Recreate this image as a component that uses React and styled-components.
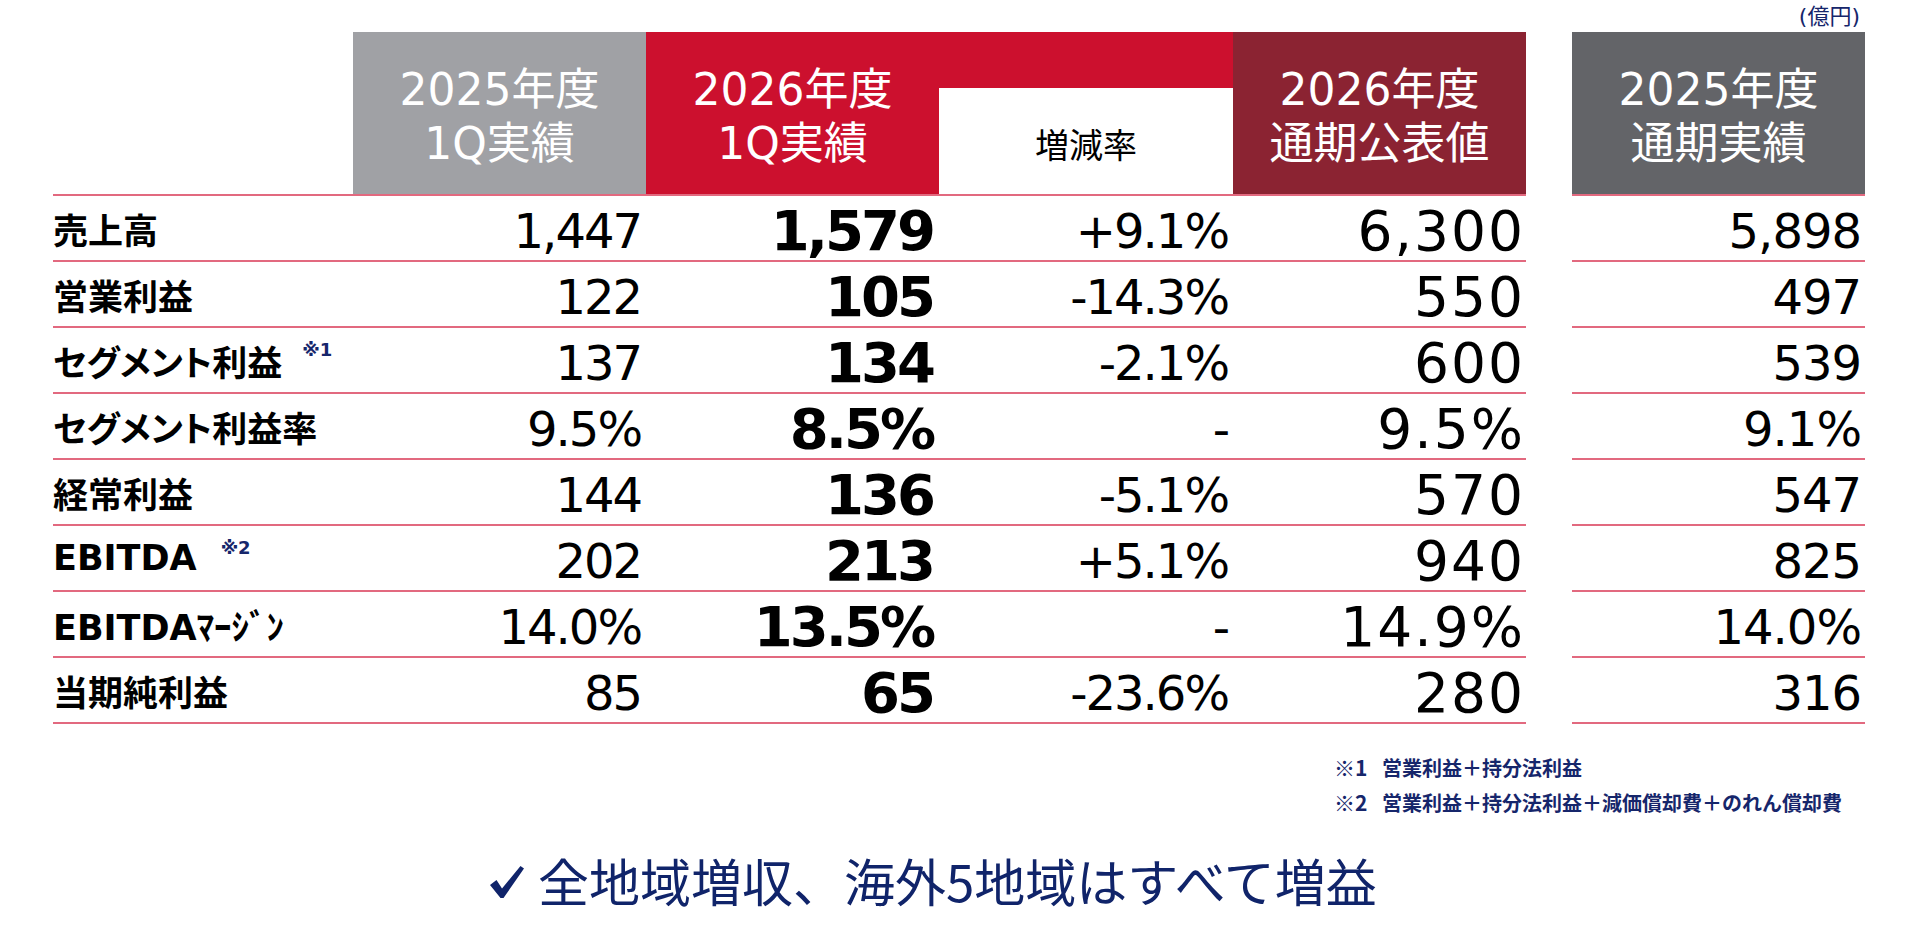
import React from "react";
import styled, { createGlobalStyle } from "styled-components";

const GlobalStyle = createGlobalStyle`
  html, body {
    margin: 0;
    padding: 0;
    background: #ffffff;
  }
  body {
    font-family: "DejaVu Sans", "Noto Sans CJK JP", sans-serif;
    color: #000000;
  }
`;

const LINE = "#e2697f";
const NAVY = "#16266b";

const Slide = styled.div`
  width: 1812px;
  margin-left: 53px;
  display: flex;
  flex-direction: column;
`;

const Unit = styled.div`
  align-self: flex-end;
  height: 32px;
  line-height: 34px;
  padding-right: 5px;
  font-size: 22px;
  color: ${NAVY};
`;

const Table = styled.div`
  display: grid;
  grid-template-columns: 300px 293px 293px 294px 293px 46px 293px;
  grid-template-rows: 164px repeat(8, 66px);
`;

const HeadBlank = styled.div`
  border-bottom: 2px solid ${LINE};
`;

const HeadCell = styled.div`
  background: ${(p) => p.$bg};
  color: #ffffff;
  display: flex;
  flex-direction: column;
  align-items: center;
  justify-content: center;
  padding-top: 8px;
  font-size: 44px;
  line-height: 54px;
  border-bottom: 2px solid ${LINE};
`;

const RateHead = styled.div`
  display: flex;
  flex-direction: column;
  border-bottom: 2px solid ${LINE};
`;

const RateBand = styled.div`
  height: 56px;
  background: #cc102e;
`;

const RateTitle = styled.div`
  flex: 1;
  display: flex;
  align-items: center;
  justify-content: center;
  padding-top: 4px;
  font-family: "Noto Sans CJK JP", sans-serif;
  font-size: 34px;
`;

const Spacer = styled.div``;

const Label = styled.div`
  display: flex;
  align-items: center;
  font-size: 35px;
  font-weight: 700;
  font-feature-settings: "palt";
  white-space: nowrap;
  border-bottom: 2px solid ${LINE};
`;

const Sup = styled.span`
  align-self: flex-start;
  margin-top: 13px;
  margin-left: ${(p) => p.$gap}px;
  font-size: 18px;
  line-height: 18px;
  font-weight: 700;
  color: ${NAVY};
`;

const Num = styled.div`
  display: flex;
  align-items: center;
  justify-content: flex-end;
  padding: 6px ${(p) => 3 - p.$ls}px 0 0;
  font-size: ${(p) => p.$size}px;
  font-weight: ${(p) => (p.$bold ? 700 : 400)};
  letter-spacing: ${(p) => p.$ls}px;
  line-height: 1;
  white-space: nowrap;
  border-bottom: 2px solid ${LINE};
`;

const Notes = styled.div`
  margin-top: 26px;
  padding-left: 1281px;
  display: flex;
  flex-direction: column;
  font-family: "Noto Sans CJK JP", sans-serif;
  font-size: 20px;
  line-height: 34px;
  font-weight: 700;
  color: ${NAVY};
  white-space: nowrap;
`;

const NoteMark = styled.span`
  display: inline-block;
  width: 48px;
  font-size: 21px;
`;

const Message = styled.div`
  margin-top: 30px;
  padding-left: 436px;
  display: flex;
  align-items: center;
  gap: 13px;
  height: 60px;
  font-family: "Noto Sans CJK JP", sans-serif;
  font-size: 51px;
  color: #10246a;
`;

const CheckIcon = styled.svg`
  width: 36px;
  height: 36px;
  margin-top: 4px;
  flex-shrink: 0;
`;

const heads = [
  { bg: "#a0a1a5", lines: ["2025年度", "1Q実績"] },
  { bg: "#cc102e", lines: ["2026年度", "1Q実績"] },
  null,
  { bg: "#8b2332", lines: ["2026年度", "通期公表値"] },
];

const cols = [
  { size: 48, ls: -2 },
  { size: 56, ls: -3, bold: true },
  { size: 48, ls: -2 },
  { size: 55, ls: 2 },
  { size: 48, ls: -1 },
];

const rows = [
  { label: "売上高", values: ["1,447", "1,579", "+9.1%", "6,300", "5,898"] },
  { label: "営業利益", values: ["122", "105", "-14.3%", "550", "497"] },
  { label: "セグメント利益", note: "※1", gap: 20, values: ["137", "134", "-2.1%", "600", "539"] },
  { label: "セグメント利益率", values: ["9.5%", "8.5%", "-", "9.5%", "9.1%"] },
  { label: "経常利益", values: ["144", "136", "-5.1%", "570", "547"] },
  { label: "EBITDA", note: "※2", gap: 24, values: ["202", "213", "+5.1%", "940", "825"] },
  { label: "EBITDAﾏｰｼﾞﾝ", values: ["14.0%", "13.5%", "-", "14.9%", "14.0%"] },
  { label: "当期純利益", values: ["85", "65", "-23.6%", "280", "316"] },
];

function NumCell({ col, value }) {
  return (
    <Num $size={col.size} $ls={col.ls} $bold={col.bold}>
      {value}
    </Num>
  );
}

function App() {
  return (
    <>
      <GlobalStyle />
      <Slide>
        <Unit>(億円)</Unit>
        <Table>
          <HeadBlank />
          {heads.map((h, i) =>
            h ? (
              <HeadCell key={i} $bg={h.bg}>
                {h.lines.map((line) => (
                  <span key={line}>{line}</span>
                ))}
              </HeadCell>
            ) : (
              <RateHead key={i}>
                <RateBand />
                <RateTitle>増減率</RateTitle>
              </RateHead>
            )
          )}
          <Spacer />
          <HeadCell $bg="#636468">
            <span>2025年度</span>
            <span>通期実績</span>
          </HeadCell>

          {rows.map((row) => (
            <React.Fragment key={row.label}>
              <Label>
                {row.label}
                {row.note && <Sup $gap={row.gap}>{row.note}</Sup>}
              </Label>
              {row.values.slice(0, 4).map((v, i) => (
                <NumCell key={i} col={cols[i]} value={v} />
              ))}
              <Spacer />
              <NumCell col={cols[4]} value={row.values[4]} />
            </React.Fragment>
          ))}
        </Table>

        <Notes>
          <div>
            <NoteMark>※1</NoteMark>営業利益＋持分法利益
          </div>
          <div>
            <NoteMark>※2</NoteMark>営業利益＋持分法利益＋減価償却費＋のれん償却費
          </div>
        </Notes>

        <Message>
          <CheckIcon viewBox="0 0 36 36">
            <path d="M1 21 L7.5 16 L13 24.5 L31.5 2 L35 4.5 L14.5 34 L11.5 34 Z" fill="currentColor" />
          </CheckIcon>
          全地域増収、海外5地域はすべて増益
        </Message>
      </Slide>
    </>
  );
}

export default App;
